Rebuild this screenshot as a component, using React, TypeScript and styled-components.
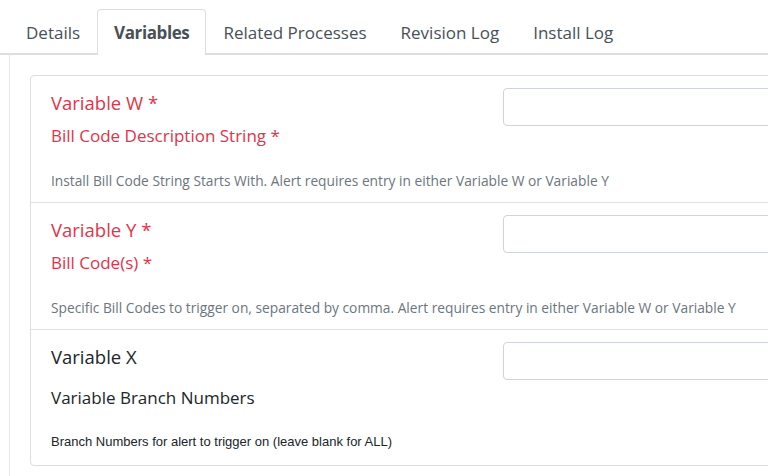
import React from "react";
import styled, { createGlobalStyle } from "styled-components";

const GlobalStyle = createGlobalStyle`
  html, body {
    margin: 0;
    padding: 0;
    background: #ffffff;
    overflow: hidden;
  }
  body {
    font-family: "Open Sans", "Noto Sans", sans-serif;
    color: #212529;
  }
  * { box-sizing: border-box; }
`;

const Page = styled.div`
  padding-top: 9px;
  width: 1200px;
`;

const TabList = styled.ul`
  display: flex;
  list-style: none;
  margin: 0;
  padding: 0 0 0 9px;
  border-bottom: 2px solid #dedede;
`;

const Tab = styled.li<{ $active?: boolean }>`
  margin-bottom: -2px;
  padding: 10px 16px 10px;
  font-size: 17px;
  line-height: 25px;
  color: #495057;
  font-weight: ${(p) => (p.$active ? 700 : 400)};
  letter-spacing: ${(p) => (p.$active ? "-0.4px" : "0")};
  background: ${(p) => (p.$active ? "#ffffff" : "transparent")};
  border: 1px solid ${(p) => (p.$active ? "#dedede" : "transparent")};
  border-bottom: none;
  border-radius: 4px 4px 0 0;
  white-space: nowrap;
`;

const Panel = styled.div`
  margin-left: 9px;
  width: 1100px;
  padding: 20px 20px 20px;
  border: 1px solid #e6e6e6;
  border-top: none;
  border-radius: 0 0 4px 4px;
`;

const Card = styled.div`
  width: 1040px;
  border: 1px solid #dedede;
  border-radius: 4px;
`;

const Row = styled.div`
  display: grid;
  grid-template-columns: 452px 1fr;
  padding: 12px 20px 11px;
  border-top: 1px solid #e2e2e2;
  &:first-child {
    border-top: none;
  }
  &:last-child {
    padding-top: 12px;
    padding-bottom: 14px;
  }
`;

const LabelColumn = styled.div`
  display: flex;
  flex-direction: column;
`;

const Title = styled.div<{ $required?: boolean }>`
  font-size: 18.5px;
  line-height: 30px;
  color: ${(p) => (p.$required ? "#e2334b" : "#212529")};
`;

const Subtitle = styled.div<{ $required?: boolean; $gap: number }>`
  margin-top: ${(p) => p.$gap}px;
  font-size: 17px;
  line-height: 27px;
  color: ${(p) => (p.$required ? "#e2334b" : "#212529")};
`;

const Help = styled.div`
  margin-top: 21px;
  font-size: 13.75px;
  line-height: 21px;
  color: #6c757d;
  white-space: nowrap;
`;

const PlainHelp = styled.div`
  margin-top: 22px;
  font-family: "Liberation Sans", Arial, sans-serif;
  font-size: 13px;
  line-height: 18px;
  color: #212529;
  white-space: nowrap;
`;

const Input = styled.input`
  height: 38px;
  width: 100%;
  border: 1px solid #ced4da;
  border-radius: 4px;
  background: #ffffff;
  padding: 6px 12px;
  font-family: inherit;
  font-size: 16px;
  outline: none;
`;

const tabs = ["Details", "Variables", "Related Processes", "Revision Log", "Install Log"];

export default function App() {
  return (
    <>
      <GlobalStyle />
      <Page>
        <TabList>
          {tabs.map((t) => (
            <Tab key={t} $active={t === "Variables"}>
              {t}
            </Tab>
          ))}
        </TabList>
        <Panel>
          <Card>
            <Row>
              <LabelColumn>
                <Title $required>Variable W *</Title>
                <Subtitle $required $gap={4}>Bill Code Description String *</Subtitle>
                <Help>
                  Install Bill Code String Starts With. Alert requires entry in either Variable W or Variable Y
                </Help>
              </LabelColumn>
              <div>
                <Input type="text" />
              </div>
            </Row>
            <Row>
              <LabelColumn>
                <Title $required>Variable Y *</Title>
                <Subtitle $required $gap={4}>Bill Code(s) *</Subtitle>
                <Help>
                  Specific Bill Codes to trigger on, separated by comma. Alert requires entry in either Variable W or Variable Y
                </Help>
              </LabelColumn>
              <div>
                <Input type="text" />
              </div>
            </Row>
            <Row>
              <LabelColumn>
                <Title>Variable X</Title>
                <Subtitle $gap={12}>Variable Branch Numbers</Subtitle>
                <PlainHelp>Branch Numbers for alert to trigger on (leave blank for ALL)</PlainHelp>
              </LabelColumn>
              <div>
                <Input type="text" />
              </div>
            </Row>
          </Card>
        </Panel>
      </Page>
    </>
  );
}
